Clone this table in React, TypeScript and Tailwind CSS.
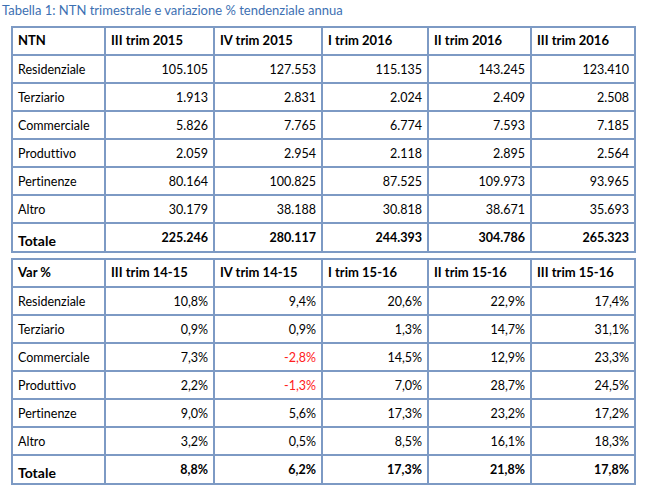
import React from "react";

type Row = { label: string; values: string[]; red?: number[] };

const ntnHead = ["NTN", "III trim 2015", "IV trim 2015", "I trim 2016", "II trim 2016", "III trim 2016"];
const ntnRows: Row[] = [
  { label: "Residenziale", values: ["105.105", "127.553", "115.135", "143.245", "123.410"] },
  { label: "Terziario", values: ["1.913", "2.831", "2.024", "2.409", "2.508"] },
  { label: "Commerciale", values: ["5.826", "7.765", "6.774", "7.593", "7.185"] },
  { label: "Produttivo", values: ["2.059", "2.954", "2.118", "2.895", "2.564"] },
  { label: "Pertinenze", values: ["80.164", "100.825", "87.525", "109.973", "93.965"] },
  { label: "Altro", values: ["30.179", "38.188", "30.818", "38.671", "35.693"] },
];
const ntnTot = ["225.246", "280.117", "244.393", "304.786", "265.323"];

const varHead = ["Var %", "III trim 14-15", "IV trim 14-15", "I trim 15-16", "II trim 15-16", "III trim 15-16"];
const varRows: Row[] = [
  { label: "Residenziale", values: ["10,8%", "9,4%", "20,6%", "22,9%", "17,4%"] },
  { label: "Terziario", values: ["0,9%", "0,9%", "1,3%", "14,7%", "31,1%"] },
  { label: "Commerciale", values: ["7,3%", "-2,8%", "14,5%", "12,9%", "23,3%"], red: [1] },
  { label: "Produttivo", values: ["2,2%", "-1,3%", "7,0%", "28,7%", "24,5%"], red: [1] },
  { label: "Pertinenze", values: ["9,0%", "5,6%", "17,3%", "23,2%", "17,2%"] },
  { label: "Altro", values: ["3,2%", "0,5%", "8,5%", "16,1%", "18,3%"] },
];
const varTot = ["8,8%", "6,2%", "17,3%", "21,8%", "17,8%"];

const cell = "border-2 border-[#7d9ac4] px-[5px]";

function DataTable({ head, rows, total }: { head: string[]; rows: Row[]; total: string[] }) {
  return (
    <table className="w-[623px] table-fixed border-collapse border-[2px] border-[#6f8dba] text-[12.5px] text-black">
      <colgroup>
        <col className="w-[93px]" />
        <col className="w-[109px]" />
        <col className="w-[108px]" />
        <col className="w-[106px]" />
        <col className="w-[103px]" />
        <col className="w-[104px]" />
      </colgroup>
      <thead>
        <tr className="h-[28px]">
          {head.map((h) => (
            <th key={h} className={`${cell} text-left font-bold text-[13px]`}>
              {h}
            </th>
          ))}
        </tr>
      </thead>
      <tbody>
        {rows.map((r) => (
          <tr key={r.label} className="h-[28px]">
            <td className={`${cell} pt-[3px]`}>{r.label}</td>
            {r.values.map((v, i) => (
              <td
                key={i}
                className={`${cell} pt-[3px] text-right ${r.red?.includes(i) ? "text-[#ff2020]" : ""}`}
              >
                {v}
              </td>
            ))}
          </tr>
        ))}
        <tr className="h-[28px]">
          <td className={`${cell} pt-[6px] font-bold text-[14px]`}>Totale</td>
          {total.map((v, i) => (
            <td key={i} className={`${cell} pt-[1px] text-right font-bold`}>
              {v}
            </td>
          ))}
        </tr>
      </tbody>
    </table>
  );
}

export default function App() {
  return (
    <div className="h-[494px] w-[645px] bg-white font-['Lato',sans-serif] [font-variant-ligatures:none]">
      <p className="pl-[2px] pt-[2px] text-[13px] leading-[16px] text-[#3d70b2]">
        Tabella 1: NTN trimestrale e variazione % tendenziale annua
      </p>
      <div className="ml-[11px] mt-[8px] flex flex-col gap-[5px]">
        <DataTable head={ntnHead} rows={ntnRows} total={ntnTot} />
        <DataTable head={varHead} rows={varRows} total={varTot} />
      </div>
    </div>
  );
}
